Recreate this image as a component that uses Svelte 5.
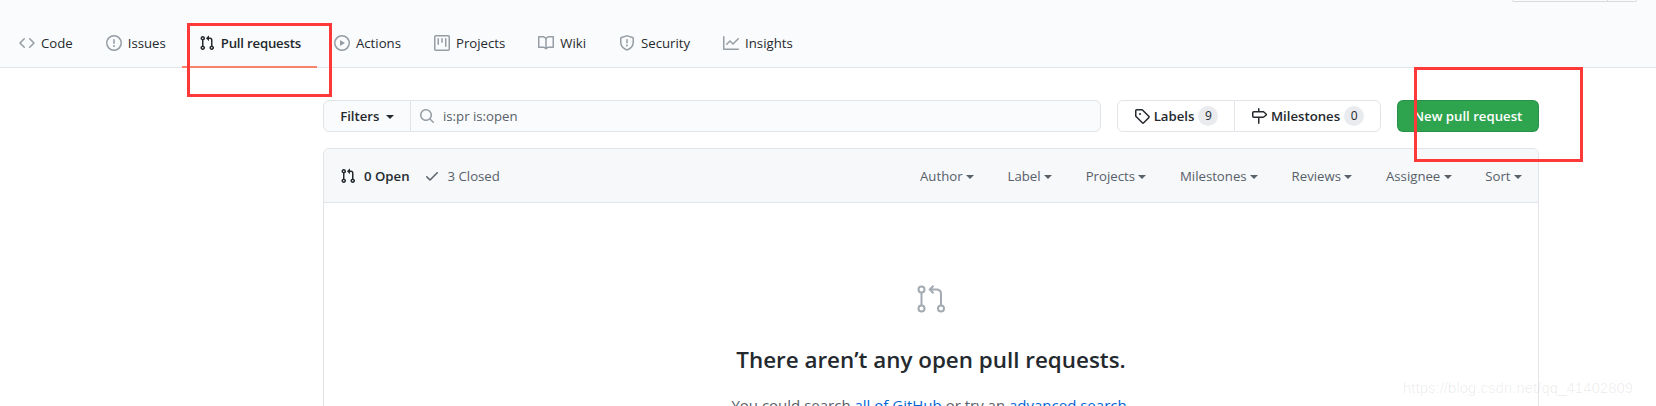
<script>
    const icons = {
        code: 'M4.72 3.22a.75.75 0 011.06 1.06L2.06 8l3.72 3.72a.75.75 0 11-1.06 1.06L.47 8.53a.75.75 0 010-1.06l4.25-4.25zm6.56 0a.75.75 0 10-1.06 1.06L13.94 8l-3.72 3.72a.75.75 0 101.06 1.06l4.25-4.25a.75.75 0 000-1.06l-4.25-4.25z',
        issue: 'M8 1.5a6.5 6.5 0 100 13 6.5 6.5 0 000-13zM0 8a8 8 0 1116 0A8 8 0 010 8zm9 3a1 1 0 11-2 0 1 1 0 012 0zm-.25-6.25a.75.75 0 00-1.5 0v3.5a.75.75 0 001.5 0v-3.5z',
        pr: 'M7.177 3.073L9.573.677A.25.25 0 0110 .854v4.792a.25.25 0 01-.427.177L7.177 3.427a.25.25 0 010-.354zM3.75 2.5a.75.75 0 100 1.5.75.75 0 000-1.5zm-2.25.75a2.25 2.25 0 113 2.122v5.256a2.251 2.251 0 11-1.5 0V5.372A2.25 2.25 0 011.5 3.25zM11 2.5h-1V4h1a1 1 0 011 1v5.628a2.251 2.251 0 101.5 0V5A2.5 2.5 0 0011 2.5zm1 10.25a.75.75 0 111.5 0 .75.75 0 01-1.5 0zM3.75 12a.75.75 0 100 1.5.75.75 0 000-1.5z',
        play: 'M1.5 8a6.5 6.5 0 1113 0 6.5 6.5 0 01-13 0zM8 0a8 8 0 100 16A8 8 0 008 0zM6.379 5.227A.25.25 0 006 5.442v5.117a.25.25 0 00.379.214l4.264-2.559a.25.25 0 000-.428L6.379 5.227z',
        project: 'M1.75 0A1.75 1.75 0 000 1.75v12.5C0 15.216.784 16 1.75 16h12.5A1.75 1.75 0 0016 14.25V1.75A1.75 1.75 0 0014.25 0H1.75zM1.5 1.75a.25.25 0 01.25-.25h12.5a.25.25 0 01.25.25v12.5a.25.25 0 01-.25.25H1.75a.25.25 0 01-.25-.25V1.75zM11.75 3a.75.75 0 00-.75.75v7.5a.75.75 0 001.5 0v-7.5a.75.75 0 00-.75-.75zm-8.25.75a.75.75 0 011.5 0v5.5a.75.75 0 01-1.5 0v-5.5zM8 3a.75.75 0 00-.75.75v3.5a.75.75 0 001.5 0v-3.5A.75.75 0 008 3z',
        book: 'M0 1.75A.75.75 0 01.75 1h4.253c1.227 0 2.317.59 3 1.501A3.744 3.744 0 0111.006 1h4.245a.75.75 0 01.75.75v10.5a.75.75 0 01-.75.75h-4.507a2.25 2.25 0 00-1.591.659l-.622.621a.75.75 0 01-1.06 0l-.622-.621A2.25 2.25 0 005.258 13H.75a.75.75 0 01-.75-.75V1.75zm8.755 3a2.25 2.25 0 012.25-2.25H14.5v9h-3.757c-.71 0-1.4.201-1.992.572l.004-7.322zm-1.504 7.324l.004-5.073-.002-2.253A2.25 2.25 0 005.003 2.5H1.5v9h3.757a3.75 3.75 0 011.994.574z',
        shield: 'M7.467.133a1.75 1.75 0 011.066 0l5.25 1.68A1.75 1.75 0 0115 3.48V7c0 1.566-.32 3.182-1.303 4.682-.983 1.498-2.585 2.813-5.032 3.855a1.7 1.7 0 01-1.33 0c-2.447-1.042-4.049-2.357-5.032-3.855C1.32 10.182 1 8.566 1 7V3.48a1.75 1.75 0 011.217-1.667l5.25-1.68zm.61 1.429a.25.25 0 00-.153 0l-5.25 1.68a.25.25 0 00-.174.238V7c0 1.358.275 2.666 1.057 3.86.784 1.194 2.121 2.34 4.366 3.297a.2.2 0 00.154 0c2.245-.956 3.582-2.104 4.366-3.298C13.225 9.666 13.5 8.36 13.5 7V3.48a.25.25 0 00-.174-.237l-5.25-1.68zM9 10.5a1 1 0 11-2 0 1 1 0 012 0zm-.25-5.75a.75.75 0 10-1.5 0v3a.75.75 0 001.5 0v-3z',
        graph: 'M1.5 1.75a.75.75 0 00-1.5 0v12.5c0 .414.336.75.75.75h14.5a.75.75 0 000-1.5H1.5V1.75zm14.28 2.53a.75.75 0 00-1.06-1.06L10 7.94 7.53 5.47a.75.75 0 00-1.06 0L3.22 8.72a.75.75 0 001.06 1.06L7 7.06l2.47 2.47a.75.75 0 001.06 0l5.25-5.25z',
        search: 'M11.5 7a4.5 4.5 0 11-9 0 4.5 4.5 0 019 0zm-.82 4.74a6 6 0 111.06-1.06l3.04 3.04a.75.75 0 11-1.06 1.06l-3.04-3.04z',
        tag: 'M2.5 7.775V2.75a.25.25 0 01.25-.25h5.025a.25.25 0 01.177.073l6.25 6.25a.25.25 0 010 .354l-5.025 5.025a.25.25 0 01-.354 0l-6.25-6.25a.25.25 0 01-.073-.177zm-1.5 0V2.75C1 1.784 1.784 1 2.75 1h5.025c.464 0 .91.184 1.238.513l6.25 6.25a1.75 1.75 0 010 2.474l-5.026 5.026a1.75 1.75 0 01-2.474 0l-6.25-6.25A1.75 1.75 0 011 7.775zM6 5a1 1 0 100 2 1 1 0 000-2z',
        milestone: 'M7.75 0a.75.75 0 01.75.75V3h3.634c.414 0 .814.147 1.13.414l2.07 1.75a1.75 1.75 0 010 2.672l-2.07 1.75a1.75 1.75 0 01-1.13.414H8.5v5.25a.75.75 0 11-1.5 0V10H2.75A1.75 1.75 0 011 8.25v-3.5C1 3.784 1.784 3 2.75 3H7V.75A.75.75 0 017.75 0zm0 8.5h4.384a.25.25 0 00.161-.06l2.07-1.75a.25.25 0 000-.38l-2.07-1.75a.25.25 0 00-.161-.06H2.75a.25.25 0 00-.25.25v3.5c0 .138.112.25.25.25h5z',
        check: 'M13.78 4.22a.75.75 0 010 1.06l-7.25 7.25a.75.75 0 01-1.06 0L2.22 9.28a.75.75 0 011.06-1.06L6 10.94l6.72-6.72a.75.75 0 011.06 0z'
    };

    const tabs = [
        { label: 'Code', icon: 'code' },
        { label: 'Issues', icon: 'issue' },
        { label: 'Pull requests', icon: 'pr', selected: true },
        { label: 'Actions', icon: 'play' },
        { label: 'Projects', icon: 'project' },
        { label: 'Wiki', icon: 'book' },
        { label: 'Security', icon: 'shield' },
        { label: 'Insights', icon: 'graph' }
    ];

    const sorts = ['Author', 'Label', 'Projects', 'Milestones', 'Reviews', 'Assignee', 'Sort'];
</script>

{#snippet octicon(name)}
    <svg class="octicon" viewBox="0 0 16 16" width="16" height="16" fill="currentColor"><path fill-rule="evenodd" d={icons[name]} /></svg>
{/snippet}

<div class="page">
    <header class="repo-head">
        <div class="top-sliver"><span class="sliver-btn"></span><span class="sliver-btn count"></span></div>
        <nav class="tabs">
            {#each tabs as tab}
                <a class="tab" class:selected={tab.selected} href="#top">
                    <span class="tab-icon">{@render octicon(tab.icon)}</span>
                    {tab.label}
                </a>
            {/each}
        </nav>
    </header>

    <main class="content">
        <div class="toolbar">
            <div class="filter-group">
                <button class="filters">Filters <i class="caret"></i></button>
                <div class="search">
                    <span class="search-icon">{@render octicon('search')}</span>
                    <span>is:pr is:open</span>
                </div>
            </div>
            <div class="labels-group">
                <a class="lm labels" href="#top">{@render octicon('tag')} Labels <span class="counter">9</span></a>
                <a class="lm miles" href="#top">{@render octicon('milestone')} Milestones <span class="counter">0</span></a>
            </div>
            <button class="new-pr">New pull request</button>
        </div>

        <section class="box">
            <div class="box-head">
                <div class="states">
                    <span class="open">{@render octicon('pr')} 0 Open</span>
                    <span class="closed">{@render octicon('check')} 3 Closed</span>
                </div>
                <div class="sorts">
                    {#each sorts as s}
                        <span class="sort">{s} <i class="caret"></i></span>
                    {/each}
                </div>
            </div>
            <div class="blank">
                <svg class="blank-icon" viewBox="0 0 28 28" width="28" height="28" fill="none" stroke="#a3aab1" stroke-width="2">
                    <circle cx="4.5" cy="4.5" r="3" />
                    <circle cx="4.5" cy="23.5" r="3" />
                    <circle cx="24" cy="23.5" r="3" />
                    <path d="M4.5 7.5v13M24 20.5V9q0-4.5-4.5-4.5H13M16.5 .8 12.8 4.5l3.7 3.7" />
                </svg>
                <h3>There aren’t any open pull requests.</h3>
                <p>You could search <a href="#top">all of GitHub</a> or try an <a href="#top">advanced search</a>.</p>
            </div>
        </section>
    </main>

    <!-- annotations drawn over the screenshot -->
    <div class="mark mark-tab"></div>
    <div class="mark mark-btn"></div>
    <div class="watermark">https://blog.csdn.net/qq_41402809</div>
</div>

<style>
:global(body) {
    margin: 0;
    background: #fff;
}
.page {
    position: relative;
    height: 406px;
    overflow: hidden;
    font-family: "Open Sans", "Noto Sans", sans-serif;
    font-size: 13.2px;
    color: #24292e;
}
.octicon {
    display: block;
    flex: none;
}
.repo-head {
    background: #fafbfc;
    border-bottom: 1px solid #e1e4e8;
    height: 67px;
}
.top-sliver {
    display: flex;
    justify-content: flex-end;
    padding-right: 19px;
    height: 25px;
}
.sliver-btn {
    width: 94px;
    height: 1px;
    border: 1px solid #d9dcdf;
    border-top: 0;
    border-radius: 0 0 0 4px;
    background: #fafbfc;
}
.sliver-btn.count {
    width: 28px;
    border-left: 0;
    border-radius: 0 0 4px 0;
}
.tabs {
    display: flex;
    padding-left: 2.5px;
    height: 43px;
}
.tab {
    display: flex;
    align-items: center;
    gap: 6px;
    padding: 0 16.5px 7px;
    color: #24292e;
    text-decoration: none;
    height: 36px;
}
.tab-icon {
    color: #959da5;
}
.tab.selected {
    font-weight: 600;
    letter-spacing: -0.2px;
    border-bottom: 2px solid #f9826c;
    padding-bottom: 5px;
}
.tab.selected .tab-icon {
    color: #24292e;
}
.content {
    width: 1216px;
    margin-left: 323px;
}
.toolbar {
    display: flex;
    margin-top: 32px;
    height: 32px;
}
.filter-group {
    display: flex;
    width: 778px;
    border: 1px solid #e1e4e8;
    border-radius: 6px;
    box-sizing: border-box;
    background: #fafbfc;
    color: #24292e;
}
.filters {
    width: 87px;
    border: 0;
    border-right: 1px solid #e1e4e8;
    background: #fafbfc;
    border-radius: 6px 0 0 6px;
    font: inherit;
    font-weight: 600;
    color: #24292e;
    padding: 0;
}
.filters .caret {
    margin-left: 3px;
}
.caret {
    display: inline-block;
    vertical-align: middle;
    border: 4px solid transparent;
    border-top-color: currentColor;
    border-bottom: 0;
}
.search {
    flex: 1;
    display: flex;
    align-items: center;
    gap: 8px;
    padding-left: 8px;
    color: #586069;
}
.search-icon {
    color: #959da5;
}
.labels-group {
    display: flex;
    margin-left: 16px;
    width: 264px;
    border: 1px solid #e1e4e8;
    border-radius: 6px;
    box-sizing: border-box;
}
.lm {
    display: flex;
    align-items: center;
    justify-content: center;
    gap: 4px;
    color: #24292e;
    text-decoration: none;
    font-weight: 600;
}
.labels {
    width: 116px;
    border-right: 1px solid #e1e4e8;
}
.miles {
    flex: 1;
}
.counter {
    display: inline-block;
    min-width: 20px;
    height: 20px;
    line-height: 20px;
    text-align: center;
    border-radius: 10px;
    background: #e9ebee;
    font-size: 12px;
    font-weight: 400;
}
.new-pr {
    margin-left: 16px;
    width: 142px;
    border: 1px solid rgba(27, 31, 35, 0.15);
    border-radius: 6px;
    background: #2ea44f;
    color: #fff;
    font: inherit;
    font-weight: 600;
    padding: 0;
}
.box {
    margin-top: 16px;
    border: 1px solid #e1e4e8;
    border-radius: 6px 6px 0 0;
    height: 400px;
}
.box-head {
    display: flex;
    justify-content: space-between;
    align-items: center;
    height: 53px;
    padding: 0 16px;
    background: #f6f8fa;
    border-bottom: 1px solid #e1e4e8;
    border-radius: 6px 6px 0 0;
}
.states {
    display: flex;
    gap: 14px;
}
.open, .closed {
    display: flex;
    align-items: center;
    gap: 8px;
}
.open {
    font-weight: 600;
}
.closed {
    color: #586069;
}
.sorts {
    display: flex;
    gap: 33.6px;
}
.sort {
    color: #586069;
    white-space: nowrap;
}
.blank {
    display: flex;
    flex-direction: column;
    align-items: center;
    padding-top: 82px;
}
.blank-icon {
    margin-bottom: 31px;
}
h3 {
    margin: 0;
    font-size: 22.4px;
    font-weight: 600;
    line-height: 32px;
}
p {
    margin: 19px 0 0;
    font-size: 15px;
    color: #586069;
}
p a {
    color: #0366d6;
    text-decoration: none;
}
.mark {
    position: absolute;
    border: 3px solid #ff3838;
    box-sizing: border-box;
}
.mark-tab {
    left: 187px;
    top: 23px;
    width: 145px;
    height: 74px;
}
.mark-btn {
    left: 1414px;
    top: 67px;
    width: 169px;
    height: 95px;
}
.watermark {
    position: absolute;
    left: 1403px;
    top: 379px;
    font-family: "Liberation Sans", sans-serif;
    font-size: 15px;
    color: rgba(0, 0, 0, 0.07);
}
</style>
